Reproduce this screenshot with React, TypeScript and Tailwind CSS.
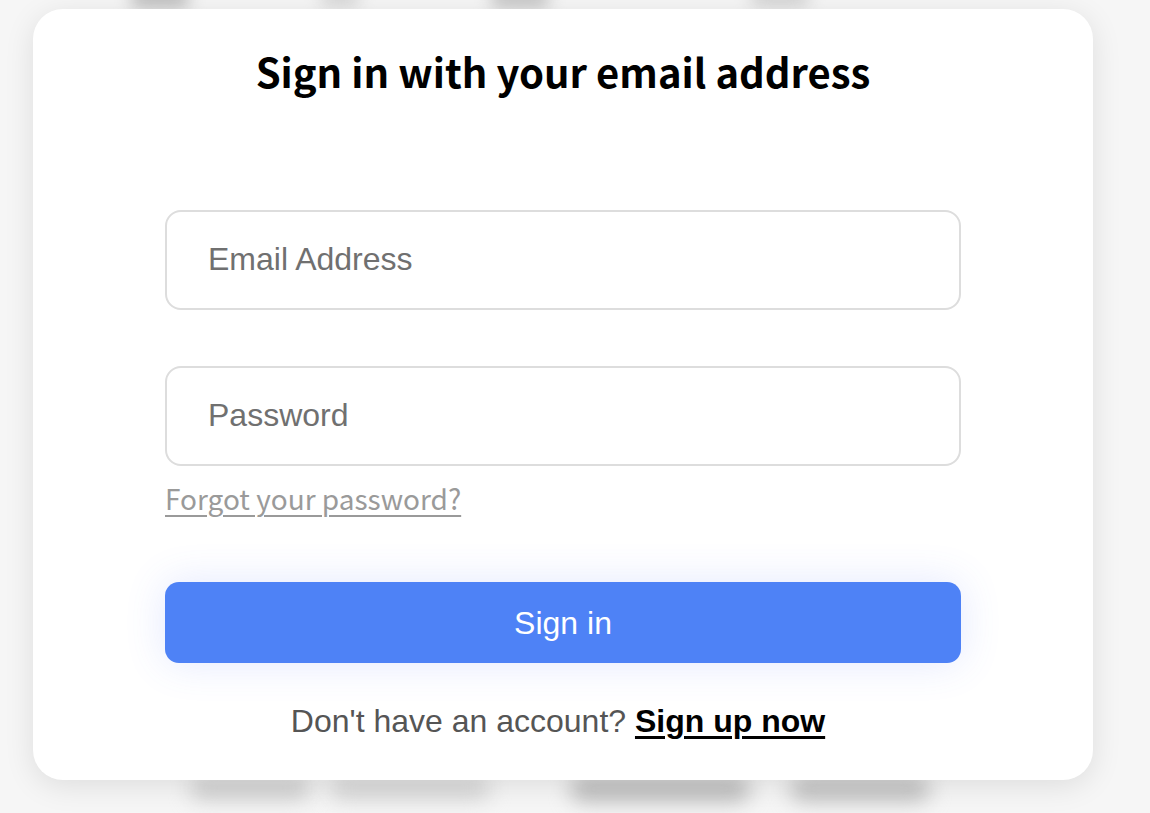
import React from "react";

const font = { fontFamily: '"Liberation Sans", Arial, sans-serif' };
const sourceFont = { fontFamily: '"Noto Sans CJK SC", "Noto Sans", sans-serif' };

export default function App() {
  return (
    <div className="relative w-[1150px] h-[813px] overflow-hidden bg-[#f6f6f6]">
      {/* blurred backdrop behind the card */}
      <div className="absolute inset-x-0 top-[-12px] flex pl-[130px] gap-[130px]">
        <div className="w-[60px] h-[20px] rounded-full bg-[#bdbdbd] blur-[8px]" />
        <div className="w-[40px] h-[18px] rounded-full bg-[#d4d4d4] blur-[8px]" />
        <div className="w-[60px] h-[20px] rounded-full bg-[#c4c4c4] blur-[8px]" />
        <div className="ml-[70px] w-[60px] h-[18px] rounded-full bg-[#d0d0d0] blur-[8px]" />
      </div>
      <div className="absolute inset-x-0 top-[776px] flex pl-[190px] gap-[20px]">
        <div className="w-[120px] h-[24px] rounded-full bg-[#cfcfcf] blur-[10px]" />
        <div className="w-[160px] h-[24px] rounded-full bg-[#d6d6d6] blur-[10px]" />
        <div className="ml-[60px] w-[180px] h-[26px] rounded-full bg-[#bdbdbd] blur-[10px]" />
        <div className="ml-[20px] w-[140px] h-[26px] rounded-full bg-[#c2c2c2] blur-[10px]" />
      </div>

      <div className="relative ml-[33px] mt-[9px] w-[1060px] h-[771px] rounded-[30px] bg-white shadow-[0_6px_30px_rgba(0,0,0,0.10)] px-[132px] flex flex-col">
        <h1 className="mt-[37px] text-center text-[40px] font-bold leading-[50px] text-black" style={sourceFont}>
          Sign in with your email address
        </h1>

        <div
          className="mt-[114px] h-[100px] rounded-[16px] border-2 border-[#dddddd] flex items-center pl-[41px] pb-[2px] text-[32px] text-[#707070]"
          style={font}
        >
          Email Address
        </div>

        <div
          className="mt-[56px] h-[100px] rounded-[16px] border-2 border-[#dddddd] flex items-center pl-[41px] pb-[2px] text-[32px] text-[#707070]"
          style={font}
        >
          Password
        </div>

        <div className="mt-[12px] flex">
          <a
            className="text-[28px] leading-[40px] text-[#9a9a9a] underline decoration-[2px] underline-offset-[5px]"
            style={sourceFont}
          >
            Forgot your password?
          </a>
        </div>

        <button
          className="mt-[64px] h-[81px] w-full rounded-[14px] bg-[#4e82f6] text-white text-[32px] shadow-[0_0_40px_rgba(78,110,246,0.16)]"
          style={font}
        >
          Sign in
        </button>

        <div className="mt-[38px] pr-[10px] text-center text-[32px] leading-[40px] text-[#555555]" style={font}>
          Don't have an account?{" "}
          <a className="font-bold text-black underline decoration-[3px] underline-offset-[4px]">Sign up now</a>
        </div>
      </div>
    </div>
  );
}
